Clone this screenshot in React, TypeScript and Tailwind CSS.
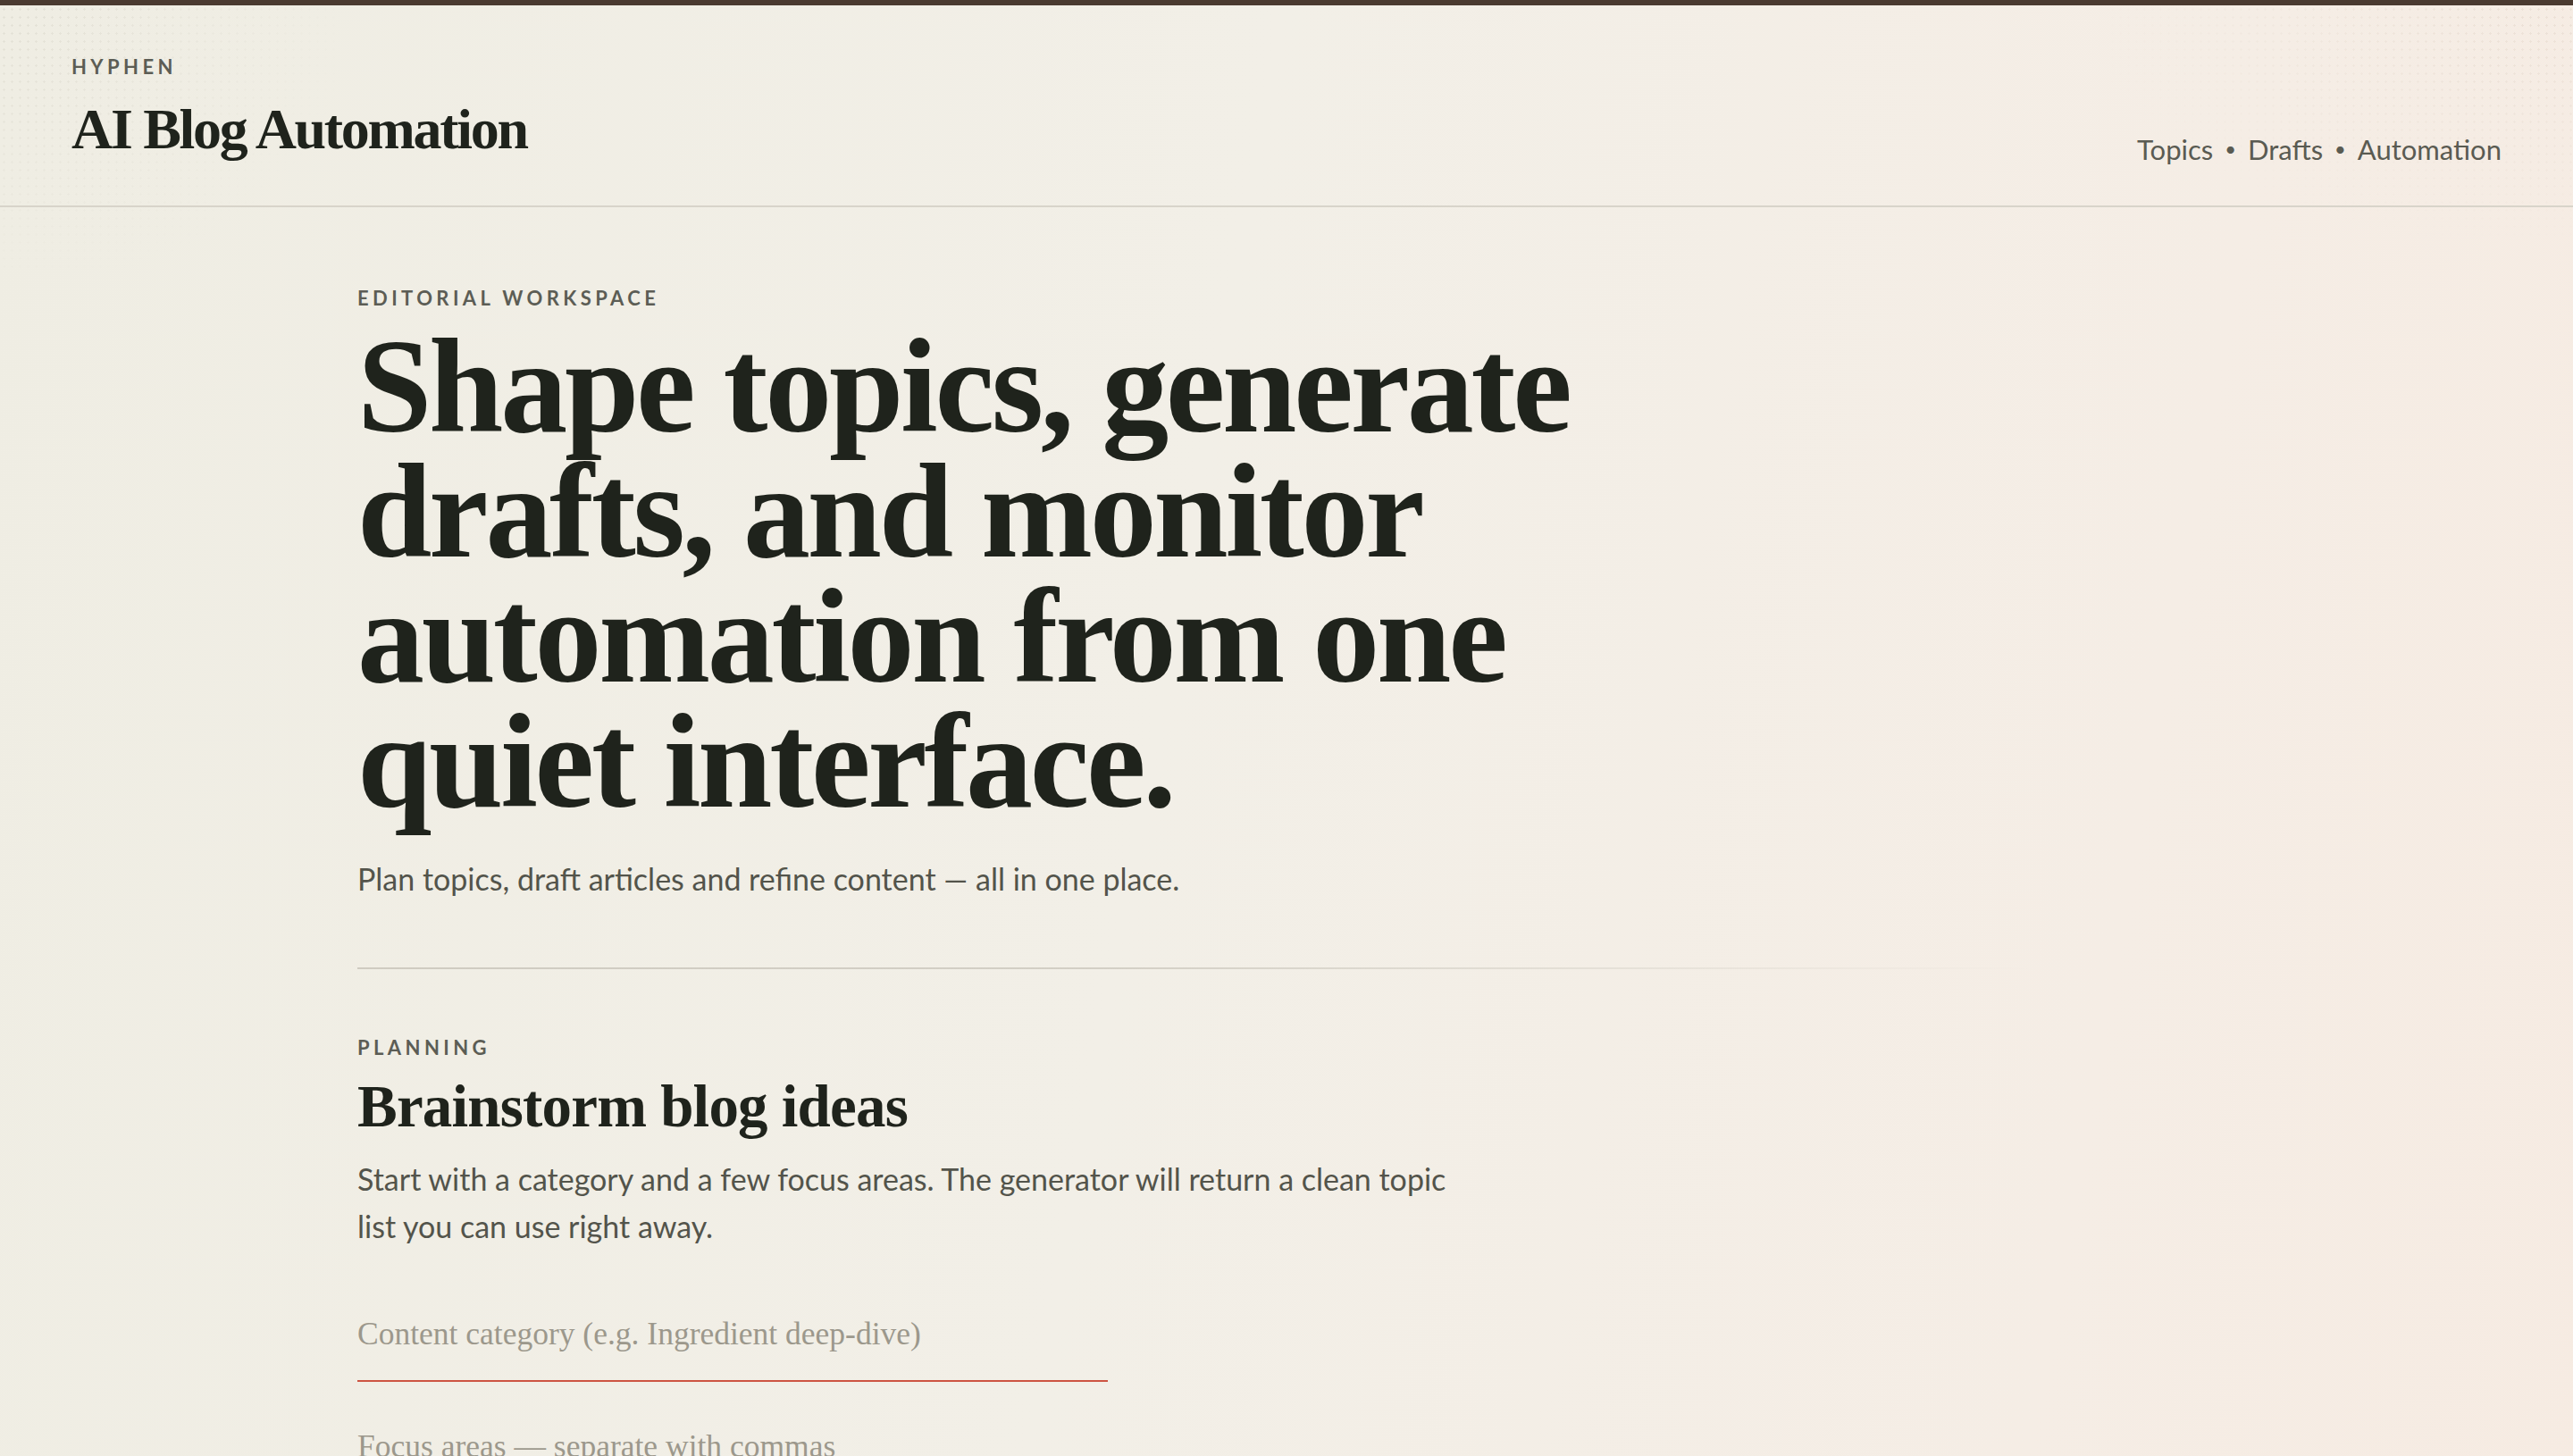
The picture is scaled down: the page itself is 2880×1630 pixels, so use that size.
import { useState } from 'react'

const NAV = ['Topics', 'Drafts', 'Automation'] as const

const serif = "font-['Liberation_Serif','Times_New_Roman',serif]"
const sans = "font-['Lato','Noto_Sans',sans-serif]"

function Eyebrow({ children }: { children: string }) {
  return (
    <p className={`${sans} text-[22px] font-bold uppercase leading-none tracking-[0.2em] text-[#5c5d55]`}>
      {children}
    </p>
  )
}

function LineField({ placeholder }: { placeholder: string }) {
  const [value, setValue] = useState('')
  return (
    <input
      value={value}
      onChange={(e) => setValue(e.target.value)}
      placeholder={placeholder}
      className={`${serif} block w-[840px] border-b-2 border-[#cd5442] bg-transparent pb-[30px] text-[35.5px] leading-[44px] text-[#1f231c] outline-none placeholder:text-[#9c988c]`}
    />
  )
}

export default function App() {
  return (
    <div className="relative min-h-screen overflow-hidden bg-[linear-gradient(100deg,#efede3_0%,#f2efe7_45%,#f5ede5_80%,#f6ebe2_100%)] text-[#1f231c]">
      {/* faint dotted texture in the corners */}
      <div className="pointer-events-none absolute left-0 top-[6px] h-[300px] w-[380px] bg-[radial-gradient(#d9d6ca_1px,transparent_1.2px)] bg-[length:9px_9px] opacity-50 [mask-image:radial-gradient(ellipse_at_top_left,black_10%,transparent_75%)]" />
      <div className="pointer-events-none absolute right-0 top-[6px] h-[260px] w-[520px] bg-[radial-gradient(#e3d6ca_1px,transparent_1.2px)] bg-[length:9px_9px] opacity-50 [mask-image:radial-gradient(ellipse_at_top_right,black_10%,transparent_75%)]" />

      <div className="relative h-[6px] bg-[#4a3a30]" />

      <header className="relative flex items-end justify-between border-b-2 border-[#d8d4ca] px-[80px] pb-[44px] pt-[58px]">
        <div className="pb-[6px]">
          <Eyebrow>Hyphen</Eyebrow>
          <h1 className={`${serif} mt-[24px] text-[64px] font-bold leading-[70px] tracking-[-0.036em]`}>
            AI Blog Automation
          </h1>
        </div>
        <nav className={`${sans} flex items-center gap-[13px] text-[31px] leading-[38px] text-[#5a5b52]`}>
          {NAV.map((item, i) => (
            <span key={item} className="flex items-center gap-[13px]">
              {i > 0 && <span className="text-[22px]">•</span>}
              <a href="#">{item}</a>
            </span>
          ))}
        </nav>
      </header>

      <main className="relative mx-auto w-full max-w-[2080px] pb-[120px] pt-[91px]">
        <section>
          <Eyebrow>Editorial workspace</Eyebrow>
          <h2 className={`${serif} mt-[17px] max-w-[1500px] text-[150px] font-bold leading-[140px] tracking-[-0.022em]`}>
            Shape topics, generate drafts, and monitor automation from one quiet interface.
          </h2>
          <p className={`${sans} mt-[40px] text-[34px] leading-[44px] text-[#53544b]`}>
            Plan topics, draft articles and refine content — all in one place.
          </p>
        </section>

        <div className="mt-[77px] h-[2px] w-full bg-[linear-gradient(90deg,#cfcbc1_0%,#d3cfc5_40%,transparent_90%)]" />

        <section className="mt-[77px]">
          <Eyebrow>Planning</Eyebrow>
          <h3 className={`${serif} mt-[16px] text-[67px] font-bold leading-[76px] tracking-[-0.012em]`}>
            Brainstorm blog ideas
          </h3>
          <p className={`${sans} mt-[17px] max-w-[1240px] text-[34px] leading-[53px] text-[#53544b]`}>
            Start with a category and a few focus areas. The generator will return a clean topic list you can use right
            away.
          </p>

          <form className="mt-[72px] flex flex-col gap-[50px]" onSubmit={(e) => e.preventDefault()}>
            <LineField placeholder="Content category (e.g. Ingredient deep-dive)" />
            <LineField placeholder="Focus areas — separate with commas" />
          </form>
        </section>
      </main>
    </div>
  )
}
